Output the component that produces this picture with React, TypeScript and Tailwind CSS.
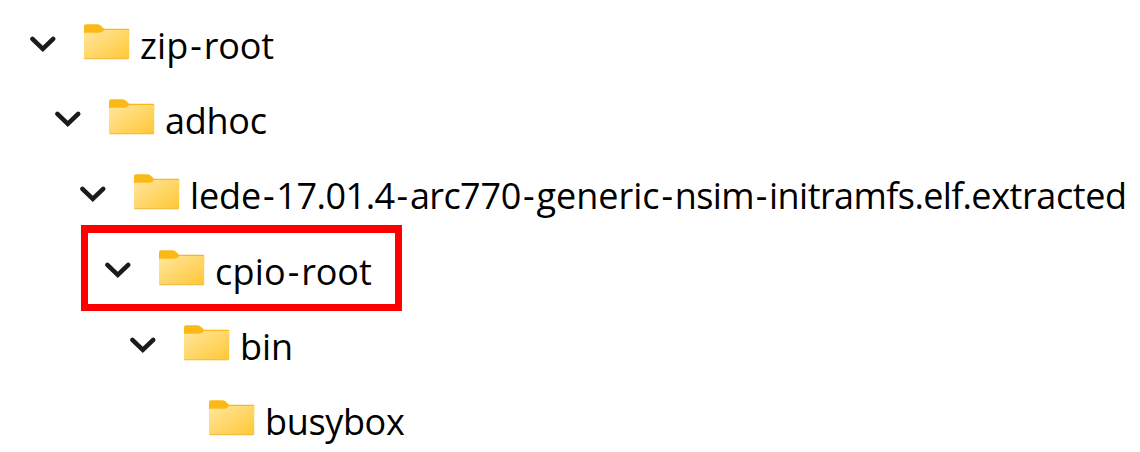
type Part = [text: string, tracking: string];
type Item = { row: string; parts: Part[]; leaf?: boolean; marked?: boolean };

const HYPHEN: Part = ['-', 'px-[1.8px]'];

const items: Item[] = [
  { row: 'h-[75px] pl-[29px]', parts: [['zip', 'tracking-[0.15px]'], HYPHEN, ['root', 'tracking-[-0.1px]']] },
  { row: 'h-[75px] pl-[54px]', parts: [['adhoc', 'tracking-[-0.25px]']] },
  {
    row: 'h-[76px] pl-[79px]',
    parts: [
      ['lede', 'tracking-[-0.1px]'],
      HYPHEN,
      ['17.01.4', 'tracking-[-0.5px]'],
      HYPHEN,
      ['arc', 'tracking-[-0.6px]'],
      ['770', 'tracking-[-0.17px]'],
      HYPHEN,
      ['generic', 'tracking-normal'],
      HYPHEN,
      ['nsim', 'tracking-[-0.65px]'],
      HYPHEN,
      ['initramfs', 'tracking-[-0.55px]'],
      ['.elf.', 'tracking-[-0.7px]'],
      ['extracted', 'tracking-[-0.4px]'],
    ],
  },
  { row: 'h-[75px] pl-[104px]', parts: [['cpio', 'tracking-[0.25px]'], HYPHEN, ['root', 'tracking-[-0.1px]']], marked: true },
  { row: 'h-[75px] pl-[129px]', parts: [['bin', 'tracking-[-0.1px]']] },
  { row: 'h-[52px] pl-[154px]', parts: [['busybox', 'tracking-[-0.35px]']], leaf: true },
];

function Chevron() {
  return (
    <svg className="mt-[26px] h-[20px] w-[28px] shrink-0" viewBox="0 0 28 20" fill="none">
      <path d="M3.4 4.9 13.8 14.9 24.2 4.9" stroke="#1b1b1b" strokeWidth="4.6" strokeLinecap="round" />
    </svg>
  );
}

function Folder() {
  return (
    <svg className="mt-[16px] ml-[27px] h-[36px] w-[46px] shrink-0" viewBox="0 0 46 36">
      <defs>
        <linearGradient id="folder-body" x1="0" y1="0" x2="1" y2="1">
          <stop offset="0" stopColor="#ffe6a0" />
          <stop offset="1" stopColor="#ffc733" />
        </linearGradient>
      </defs>
      <path d="M0 12V2.2Q0 .2 2 .2H13.5Q15.5 .2 17 1.7L20 4.8H44.3Q45.2 4.8 45.2 5.6V12Z" fill="#fbb917" />
      <path d="M0 10Q0 8.8 1.5 8.8H14.5Q17 8.8 18.5 7.5L20.3 6H45.2V33.7Q45.2 35.2 43.7 35.2H1.5Q0 35.2 0 33.7Z" fill="url(#folder-body)" />
      <path d="M.5 34.6H44.7" stroke="#f2bd48" strokeWidth="1" />
    </svg>
  );
}

export default function App() {
  return (
    <div className="flex h-[452px] w-[1140px] flex-col overflow-hidden bg-white pt-[8px] font-['Open_Sans','Noto_Sans',sans-serif] text-black">
      {items.map((item, index) => (
        <div key={index} className={`relative flex shrink-0 items-start ${item.row}`}>
          {item.leaf ? <div className="w-[28px] shrink-0" /> : <Chevron />}
          <Folder />
          <span className="ml-[10px] mt-[13px] text-[36px] leading-[50px] whitespace-nowrap">
            {item.parts.map(([text, tracking], i) => (
              <span key={i} className={tracking}>{text}</span>
            ))}
          </span>
          {item.marked && (
            <div className="absolute top-[-9px] left-[81px] h-[86px] w-[321px] border-[7px] border-t-[8px] border-[#ff0000]" />
          )}
        </div>
      ))}
    </div>
  );
}
